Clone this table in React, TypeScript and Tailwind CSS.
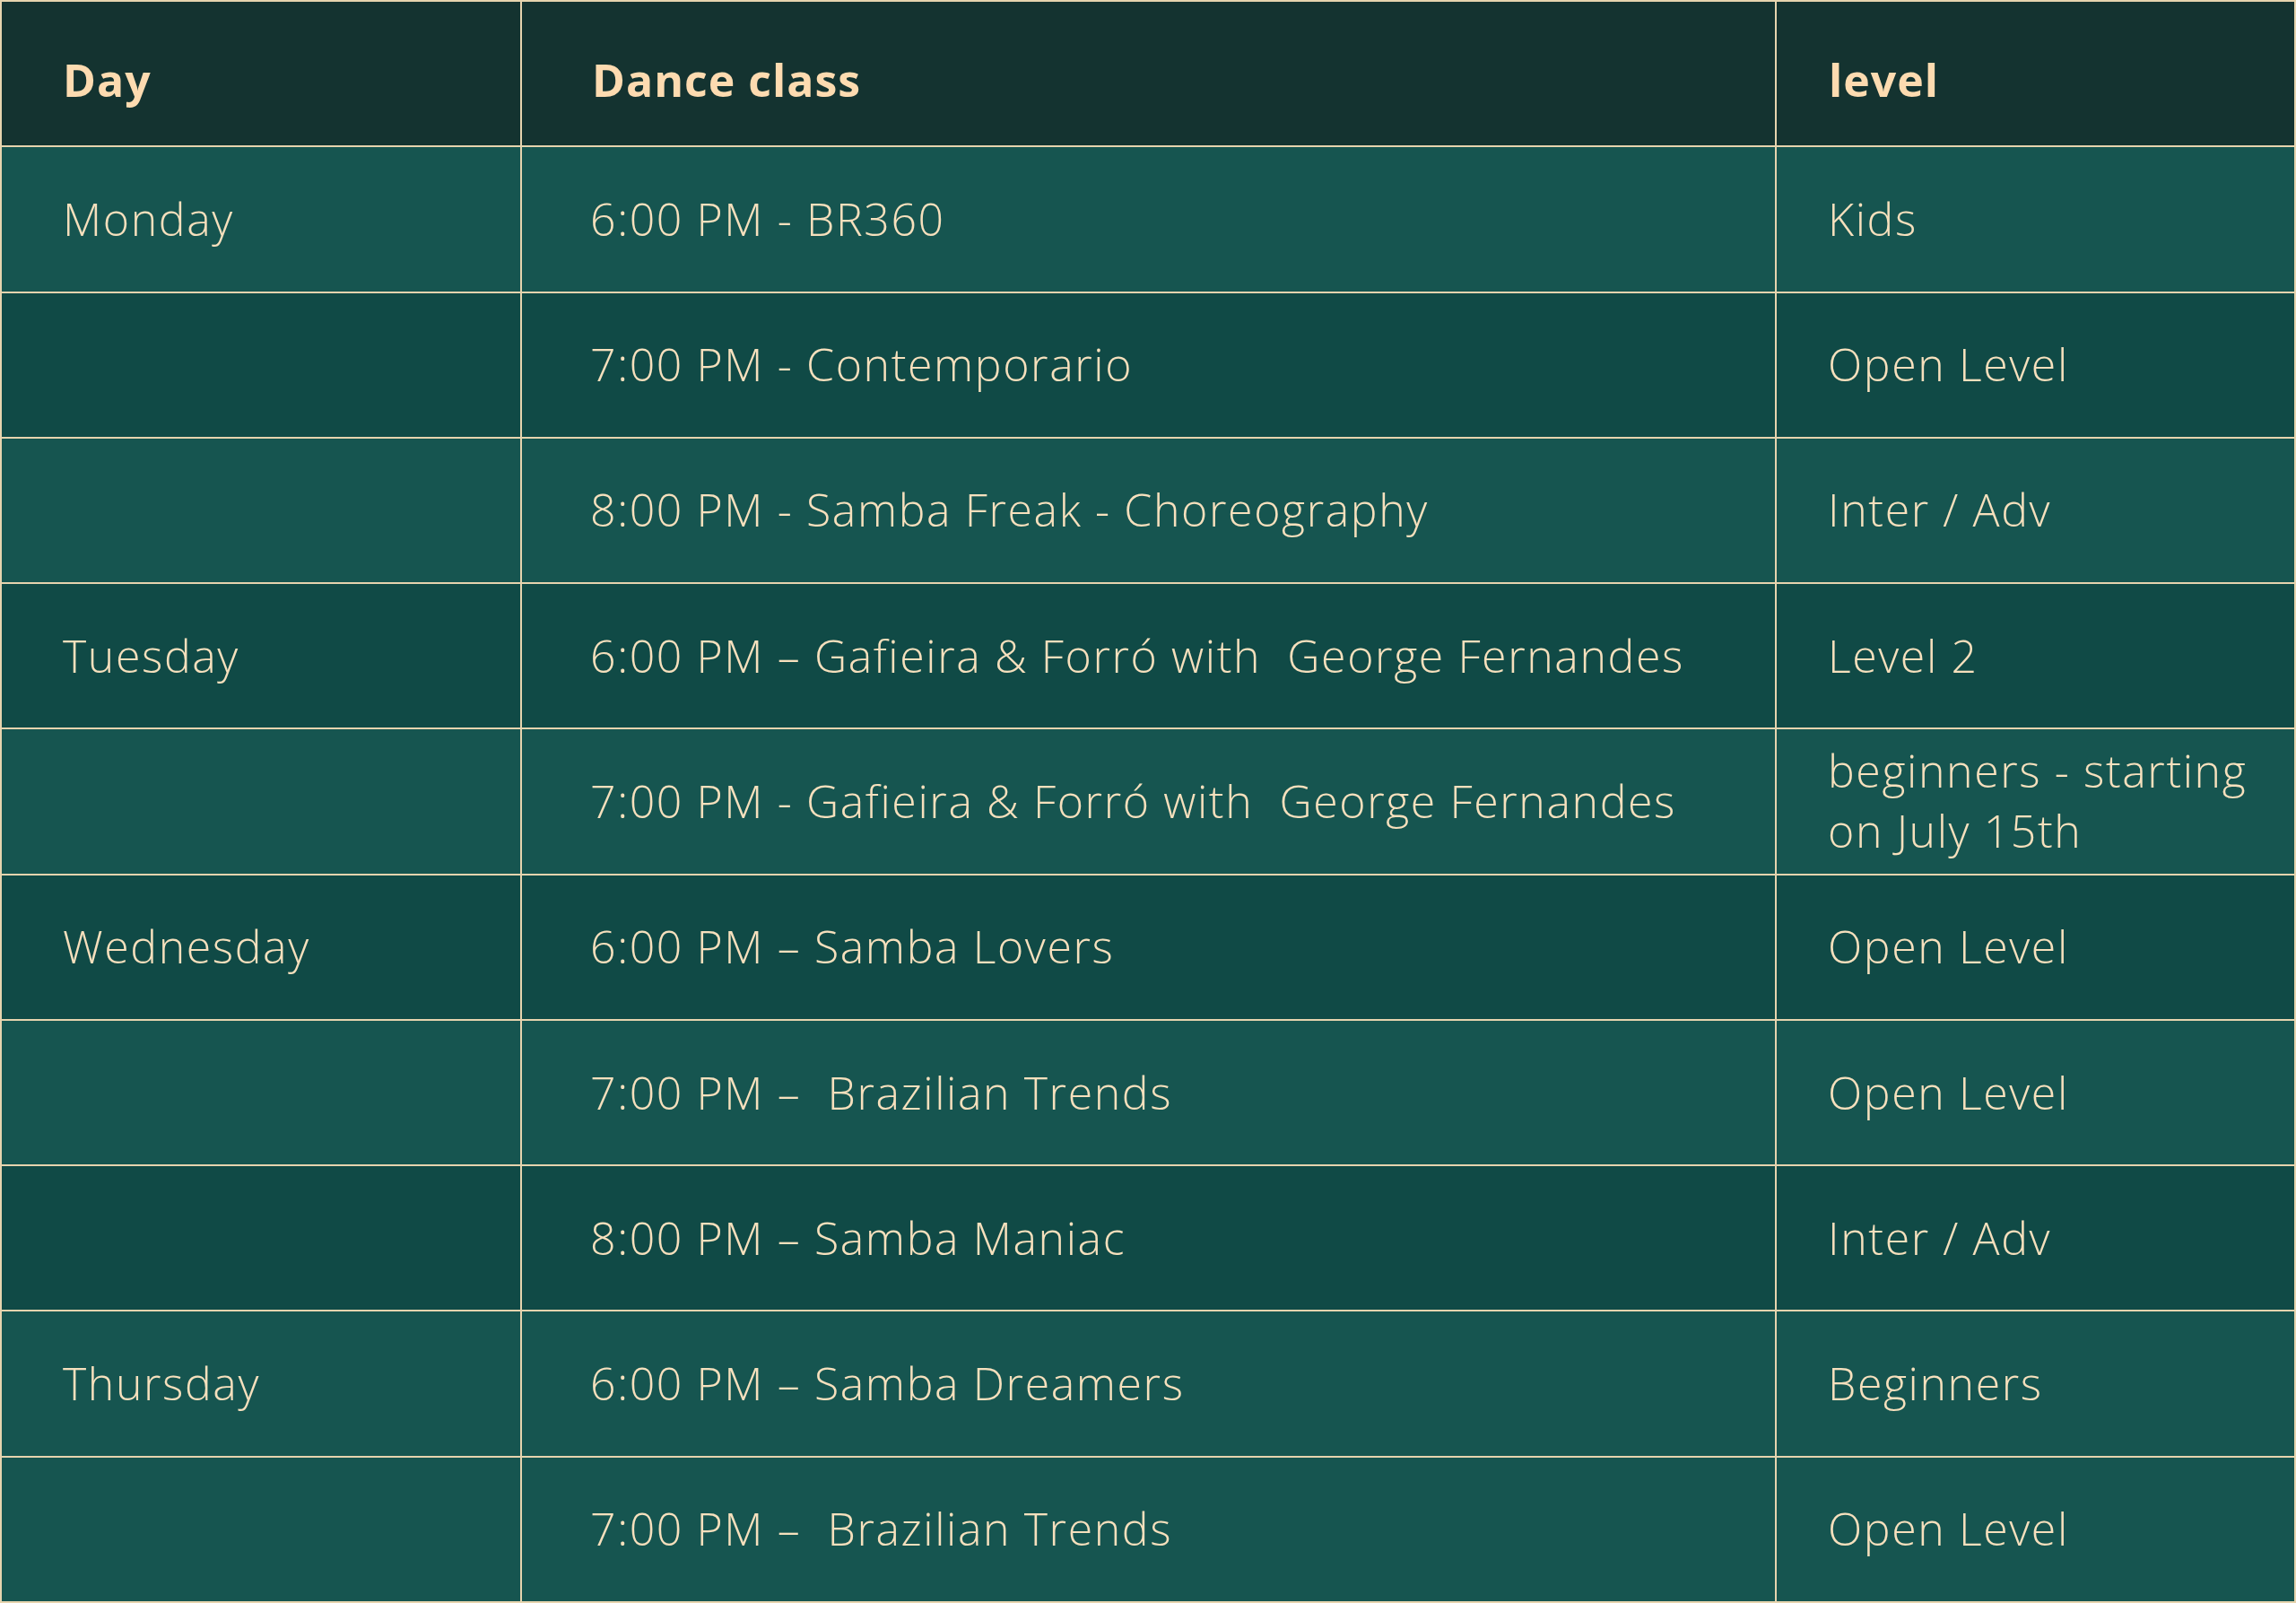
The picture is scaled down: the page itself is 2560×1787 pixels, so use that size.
import React from 'react';

type Row = {
  day?: string;
  dance: string;
  level: string;
  tone: 'light' | 'dark';
};

const rows: Row[] = [
  { day: 'Monday', dance: '6:00 PM - BR360', level: 'Kids', tone: 'light' },
  { dance: '7:00 PM - Contemporario', level: 'Open Level', tone: 'dark' },
  { dance: '8:00 PM - Samba Freak - Choreography', level: 'Inter / Adv', tone: 'light' },
  { day: 'Tuesday', dance: '6:00 PM – Gafieira & Forró with  George Fernandes', level: 'Level 2', tone: 'dark' },
  { dance: '7:00 PM - Gafieira & Forró with  George Fernandes', level: 'beginners - starting on July 15th', tone: 'light' },
  { day: 'Wednesday', dance: '6:00 PM – Samba Lovers', level: 'Open Level', tone: 'dark' },
  { dance: '7:00 PM –  Brazilian Trends', level: 'Open Level', tone: 'light' },
  { dance: '8:00 PM – Samba Maniac', level: 'Inter / Adv', tone: 'dark' },
  { day: 'Thursday', dance: '6:00 PM – Samba Dreamers', level: 'Beginners', tone: 'light' },
  { dance: '7:00 PM –  Brazilian Trends', level: 'Open Level', tone: 'light' },
];

const cell = 'flex items-center border-r-2 border-b-2 border-[#e6d4ae]';
const head = 'text-[50px] font-bold tracking-[1px] text-[#fddbb0] pt-[14px]';
const body = 'text-[50px] font-light tracking-[1.6px] text-[#f6e0bd]';

const App: React.FC = () => {
  return (
    <div className="w-[2560px] h-[1787px] bg-[#114a46] font-['Open_Sans',sans-serif]">
      <div className="grid h-full grid-cols-[580px_1399px_1fr] grid-rows-[repeat(11,1fr)] border-l-2 border-t-2 border-[#e6d4ae]">
        {/* Header */}
        <div className={`${cell} bg-[#143330] pl-[68px]`}>
          <span className={head}>Day</span>
        </div>
        <div className={`${cell} bg-[#143330] pl-[78px]`}>
          <span className={head}>Dance class</span>
        </div>
        <div className={`${cell} bg-[#143330] pl-[58px]`}>
          <span className={head}>level</span>
        </div>

        {rows.map((r, i) => {
          const bg = r.tone === 'light' ? 'bg-[#165550]' : 'bg-[#104a46]';
          return (
            <React.Fragment key={i}>
              <div className={`${cell} ${bg} pl-[68px]`}>
                <span className={body}>{r.day}</span>
              </div>
              <div className={`${cell} ${bg} pl-[76px]`}>
                <span className={`${body} whitespace-pre`}>{r.dance}</span>
              </div>
              <div className={`${cell} ${bg} pl-[57px] pr-3`}>
                <span className={`${body} leading-[1.34]`}>{r.level}</span>
              </div>
            </React.Fragment>
          );
        })}
      </div>
    </div>
  );
};

export default App;
